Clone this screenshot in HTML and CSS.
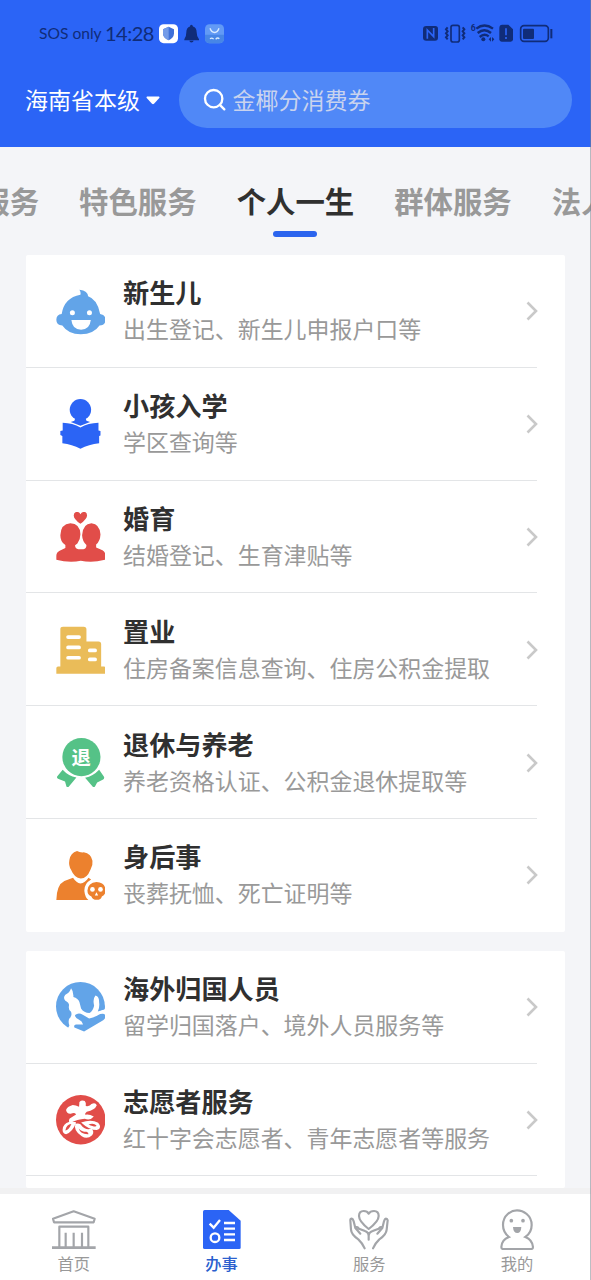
FILE: index.html
```html
<!DOCTYPE html>
<html lang="zh-CN">
<head>
<meta charset="utf-8">
<title>办事</title>
<link rel="stylesheet" href="styles.css">
</head>
<body>
<div class="app">
  <header class="header">
    <div class="status">
      <span class="carrier">SOS only</span>
      <span class="clock">14:28</span>
      <svg class="status-left" viewBox="474 66 204 68">
        <rect x="477" y="72" width="57" height="57" rx="14" fill="#fff"/>
        <path d="M506 80 L522 87 V101 Q521 114 506 120 Q490 114 489 101 V87Z" fill="#3f70d8"/>
        <path d="M506 80 L489 87 V101 Q490 114 506 120Z" fill="#739be8"/>
        <path d="M574 74 Q578 74 579 79 Q590 83 590 96 Q590 110 597 117 V120 H553 V117 Q559 110 559 96 Q559 83 570 79 Q570 74 574 74Z M568 122 H581 Q580 127 574 127 Q569 127 568 122Z" fill="#102c79"/>
        <rect x="615" y="72" width="57" height="57" rx="13" fill="#629af5"/>
        <path d="M615 104 H672 V116 Q672 129 659 129 H628 Q615 129 615 116Z" fill="#4786e6"/>
        <path d="M630 84 Q634 96 644 97 Q653 96 657 84 M630 116 Q636 111 641 117 M647 117 Q653 111 658 116" fill="none" stroke="#d7eaff" stroke-width="4"/>
      </svg>
      <svg class="status-right" viewBox="366 66 396 66">
        <g fill="none" stroke="#102c79" stroke-width="5">
          <rect x="453" y="76" width="25" height="50" rx="6"/>
          <path d="M443 82 l-5 6 5 6 -5 6 5 6 -5 6 5 6 M488 82 l5 6 -5 6 5 6 -5 6 5 6 -5 6" stroke-width="6"/>
          <path d="M529 86 Q553 67 579 86 M533 99 Q553 82 573 99 M539 111 Q553 99 566 109" stroke-width="7"/>
          <rect x="662" y="77" width="83" height="47" rx="10"/>
          <path d="M754 87 V115" stroke-width="6"/>
        </g>
        <g fill="#102c79">
          <path d="M379 78 H406 Q414 78 414 86 V113 Q414 122 405 122 H379 Q369 122 369 113 V87 Q369 78 379 78Z"/>
          <circle cx="550" cy="118" r="6"/>
          <path d="M566 118 l7 -7 v14z M583 118 l-7 -7 v14z"/>
          <path d="M607 74 H625 L639 88 V118 Q639 125 632 125 H605 Q598 125 598 118 V84 Q598 74 607 74Z"/>
          <rect x="669" y="86" width="33" height="31" rx="3"/>
        </g>
        <path d="M382 116 V90 L401 110 V84" fill="none" stroke="#2b64f6" stroke-width="5"/>
        <path d="M618 85 V106 M618 111 V117" stroke="#2b64f6" stroke-width="5"/>
        <text x="512" y="94" class="wifi-gen">6</text>
      </svg>
    </div>
    <div class="search-row">
      <span class="region">海南省本级</span>
      <svg class="caret" viewBox="0 0 14 9"><path d="M1 .5 H13 Q14 1 13.3 2 L8 7.7 Q7 8.6 6 7.7 L.7 2 Q0 1 1 .5Z" fill="#fff"/></svg>
      <div class="search">
        <svg class="search-icon" viewBox="608 264 72 72"><g fill="none" stroke="#fff" stroke-width="7" stroke-linecap="round"><circle cx="640" cy="296" r="26"/><path d="M660 316 L672 328"/></g></svg>
        <span class="hint">金椰分消费券</span>
      </div>
    </div>
  </header>

  <nav class="tabs">
    <span class="tab">主题服务</span>
    <span class="tab">特色服务</span>
    <span class="tab active">个人一生</span>
    <span class="tab">群体服务</span>
    <span class="tab">法人一生</span>
  </nav>

  <main class="content">
    <section class="card">
      <article class="row">
        <svg class="icon" viewBox="107 51 148 148">
          <path d="M177 59 Q203 62 203 79 Q231 88 239 132 Q255 134 255 149 Q255 166 237 166 Q220 192 181 192 Q143 192 126 166 Q108 166 108 149 Q108 134 124 132 Q131 83 180 74 Q182 66 177 59Z" fill="#62a4e8"/>
          <circle cx="156" cy="128" r="7.5" fill="#fff"/><circle cx="207" cy="128" r="7.5" fill="#fff"/>
          <path d="M153 150 H211 Q208 179 182 179 Q156 179 153 150Z" fill="#fff"/>
        </svg>
        <div class="copy"><h2>新生儿</h2><p>出生登记、新生儿申报户口等</p></div>
        <svg class="arrow" viewBox="0 0 12 20"><path d="M1.5 1.5 L10 10 L1.5 18.5"/></svg>
      </article>
      <article class="row">
        <svg class="icon" viewBox="107 389 148 148">
          <g fill="#2b64f5"><circle cx="180" cy="421" r="32"/>
          <path d="M165 445 H195 L198 454 L209 458 L180 469 L151 458 L162 454Z"/>
          <path d="M127 460 Q157 461 180 474 Q203 461 234 460 V483 L240 485 V498 L236 500 V521 Q205 524 180 538 Q155 524 126 521 V500 L120 497 V485 L127 483Z"/></g>
        </svg>
        <div class="copy"><h2>小孩入学</h2><p>学区查询等</p></div>
        <svg class="arrow" viewBox="0 0 12 20"><path d="M1.5 1.5 L10 10 L1.5 18.5"/></svg>
      </article>
      <article class="row">
        <svg class="icon" viewBox="107 67.5 148 148">
          <g fill="#e14d49"><path d="M180 103 Q160 89 160 78 Q160 68 169 67 Q177 67 180 74 Q184 67 192 67 Q200 68 200 78 Q199 89 180 103Z"/>
          <path d="M150 101 Q179 102 180 134 Q180 150 171 162 L164 167 Q164 177 174 179 H189 Q198 177 198 166 Q186 156 185 137 Q187 102 213 101 Q238 103 240 135 Q239 155 227 165 V174 L246 182 Q255 187 255 199 V210 Q230 216 211 216 Q195 216 181 213 Q168 216 152 216 Q130 216 108 210 V198 Q108 188 118 183 L135 175 V166 Q120 158 120 137 Q121 103 150 101Z"/></g>
        </svg>
        <div class="copy"><h2>婚育</h2><p>结婚登记、生育津贴等</p></div>
        <svg class="arrow" viewBox="0 0 12 20"><path d="M1.5 1.5 L10 10 L1.5 18.5"/></svg>
      </article>
      <article class="row">
        <svg class="icon" viewBox="107 406 148 148">
          <path d="M120 530 V418 Q120 411 128 411 H190 Q198 411 198 419 V455 H234 Q242 455 242 463 V530 H250 Q255 530 255 535 V552 H108 V535 Q108 530 113 530Z" fill="#eabc59"/>
          <path d="M143 442 H176 M143 473 H176 M143 504 H176 M208 482 H224 M208 509 H224" stroke="#fff" stroke-width="11" stroke-linecap="round"/>
        </svg>
        <div class="copy"><h2>置业</h2><p>住房备案信息查询、住房公积金提取</p></div>
        <svg class="arrow" viewBox="0 0 12 20"><path d="M1.5 1.5 L10 10 L1.5 18.5"/></svg>
      </article>
      <article class="row">
        <svg class="icon" viewBox="107 54 148 148">
          <g fill="#55c287"><circle cx="183" cy="111" r="57"/><path d="M127 149 Q144 168 168 172 L145 200 Q141 204 138 198 L134 184 L113 176 Q108 173 111 168Z M236 149 Q218 168 194 173 L217 200 Q221 203 224 198 L230 187 L248 178 Q253 174 250 169Z"/></g>
          <text x="182.5" y="134" class="medal">退</text>
        </svg>
        <div class="copy"><h2>退休与养老</h2><p>养老资格认证、公积金退休提取等</p></div>
        <svg class="arrow" viewBox="0 0 12 20"><path d="M1.5 1.5 L10 10 L1.5 18.5"/></svg>
      </article>
      <article class="row">
        <svg class="icon" viewBox="107 392 148 148">
          <g fill="#ec812e"><path d="M170 392 Q178 397 190 396 Q212 400 216 421 Q218 435 210 448 Q200 474 181 474 Q162 473 152 448 Q144 436 147 419 Q150 398 170 392Z"/>
          <path d="M158 472 Q168 488 180 489 Q194 488 204 472 L212 477 Q190 490 192 513 Q194 532 206 540 H108 Q109 493 132 482Z"/>
          <path d="M228 485 Q255 487 255 510 Q255 524 244 528 Q242 538 229 538 Q216 538 213 528 Q201 523 201 510 Q203 487 228 485Z"/></g>
          <circle cx="216" cy="507" r="7" fill="#fff"/><circle cx="240" cy="507" r="7" fill="#fff"/><path d="M228 515 l5 10 h-10z" fill="#fff"/>
        </svg>
        <div class="copy"><h2>身后事</h2><p>丧葬抚恤、死亡证明等</p></div>
        <svg class="arrow" viewBox="0 0 12 20"><path d="M1.5 1.5 L10 10 L1.5 18.5"/></svg>
      </article>
    </section>

    <section class="card">
      <article class="row">
        <svg class="icon" viewBox="107 68 148 148">
          <circle cx="180" cy="141" r="73" fill="#62a4e8"/>
          <path d="M152 87 Q160 96 159 113 Q173 117 177 128 L182 147 Q190 160 207 161 Q217 156 221 139 Q216 118 225 108 Q236 111 237 125 Q241 143 236 153 L256 149 V217 H137 L147 198 Q142 184 148 176 Q156 169 152 157 Q143 153 146 137 Q146 130 135 124 Q127 115 135 106 Q148 101 152 87Z" fill="#fff"/>
          <path d="M164 167 Q174 158 187 166 L206 177 Q222 175 239 164 Q254 160 255 170 Q256 176 248 182 L191 216 L162 204 Q159 196 167 195 H188 Q185 185 176 181 Q163 174 164 167Z" fill="#62a4e8"/>
          <path d="M234 113 Q248 121 253 141 Q254 149 248 151 L232 156 Q240 143 234 113Z" fill="#62a4e8"/>
        </svg>
        <div class="copy"><h2>海外归国人员</h2><p>留学归国落户、境外人员服务等</p></div>
        <svg class="arrow" viewBox="0 0 12 20"><path d="M1.5 1.5 L10 10 L1.5 18.5"/></svg>
      </article>
      <article class="row">
        <svg class="icon" viewBox="107 406 148 148">
          <circle cx="181" cy="480" r="74" fill="#e14d49"/>
          <path d="M177 427 Q184 420 193 424 Q199 431 196 439 Q208 441 213 433 Q225 427 229 437 Q223 452 199 456 Q192 462 195 465 Q207 463 220 470 Q210 483 193 477 Q172 478 149 490 Q143 484 148 476 L167 464 Q163 457 151 462 Q139 463 137 451 Q140 441 157 436 Q166 436 176 441Z" fill="#fff"/>
          <path d="M165 487 Q137 482 128 502 Q123 522 137 523 Q156 518 167 489Z M165 492 Q181 489 184 499 Q195 512 213 507 Q223 516 215 526 Q200 540 184 529 Q158 513 165 492Z M182 488 Q213 478 233 489 Q247 505 229 511 Q207 511 182 488Z" fill="#fff"/>
          <path d="M153 493 Q138 494 135 512 Q145 512 153 493Z M175 506 Q180 524 204 523 Q205 519 198 516 Q183 516 175 506Z M204 494 Q220 489 228 497 Q228 505 204 494Z" fill="#e14d49"/>
        </svg>
        <div class="copy"><h2>志愿者服务</h2><p>红十字会志愿者、青年志愿者等服务</p></div>
        <svg class="arrow" viewBox="0 0 12 20"><path d="M1.5 1.5 L10 10 L1.5 18.5"/></svg>
      </article>
      <div class="row-peek"></div>
    </section>
  </main>

  <footer class="tabbar">
    <a class="item">
      <svg class="nav-icon" viewBox="153 117 138 123"><g fill="none" stroke="#a3a5a9" stroke-width="6.5" stroke-linejoin="round"><path d="M221 124 L284 146 L281 157 H162 L159 146Z"/><path d="M178 232 V170 H265 V232 M197 188 V232 M221 188 V232 M246 188 V232"/><path d="M156 233 H287" stroke-width="8"/></g></svg>
      <span>首页</span>
    </a>
    <a class="item current">
      <svg class="nav-icon" viewBox="594 117 138 123"><path d="M611 120 H683 L719 152 V233 Q719 237 715 237 H611 Q606 237 606 233 V125 Q606 120 611 120Z" fill="#2b64f5"/><g fill="none" stroke="#fff" stroke-width="7"><path d="M626 161 L638 173 L657 150"/><circle cx="642" cy="203" r="13"/><path d="M669 159 H702 M669 176 H702 M669 193 H702 M669 210 H702"/></g></svg>
      <span>办事</span>
    </a>
    <a class="item">
      <svg class="nav-icon" viewBox="138 117 138 123"><g fill="none" stroke="#a3a5a9" stroke-width="6.5" stroke-linejoin="round" stroke-linecap="round"><path d="M206 177 Q177 154 177 138 Q177 123 191 123 Q202 123 206 131 Q211 123 222 123 Q236 123 236 138 Q236 154 206 177Z"/><path d="M194 235 Q187 219 175 208 Q154 194 153 179 L151 151 Q151 146 155 146 Q159 147 161 154 L166 174 L181 191 M166 174 Q170 168 177 176 L195 183 Q206 187 206 198 V209 M219 235 Q226 219 238 208 Q259 194 260 179 L263 151 Q262 146 258 146 Q254 147 252 154 L247 174 L232 191 M247 174 Q243 168 236 176 L218 183 Q206 187 206 198"/></g></svg>
      <span>服务</span>
    </a>
    <a class="item">
      <svg class="nav-icon" viewBox="583 117 138 123"><path d="M652 121 C634 121 610 136 610 165 Q610 187 628 201 Q606 209 605 231 Q605 237 610 237 H695 Q700 237 700 231 Q698 209 677 201 Q696 188 696 165 C696 136 671 121 652 121Z" fill="none" stroke="#a3a5a9" stroke-width="6.5"/><g fill="#a3a5a9"><circle cx="635" cy="152" r="5.5"/><circle cx="670" cy="152" r="5.5"/><path d="M640 171 H665 Q664 189 653 189 Q641 189 640 171Z"/></g></svg>
      <span>我的</span>
    </a>
  </footer>
  <div class="edge"></div>
</div>
</body>
</html>
```

FILE: styles.css
```css
* { box-sizing: border-box; }
body {
  margin: 0;
  font-family: "Noto Sans CJK SC", sans-serif;
  background: #f4f5f8;
}
svg { display: block; flex: none; }
h2, p { margin: 0; }
.app {
  position: relative;
  display: flex;
  flex-direction: column;
  width: 591px;
  height: 1280px;
  overflow: hidden;
  white-space: nowrap;
}
.header {
  flex: none;
  height: 147px;
  background: #2b64f6;
}
.status {
  display: flex;
  align-items: center;
  height: 66px;
  padding: 0 37px 0 39px;
  color: #102c79;
  font-family: Lato, sans-serif;
}
.carrier { width: 66px; font-size: 15.6px; }
.clock { width: 53px; font-size: 20px; letter-spacing: -0.5px; }
.status-left { width: 68px; height: 23px; }
.status-right { width: 132px; height: 22px; margin-left: auto; }
.wifi-gen { font: bold 26px "Roboto", sans-serif; fill: #102c79; }
.search-row {
  display: flex;
  align-items: center;
  height: 56px;
  margin-top: 6px;
  padding: 0 19px 0 25px;
}
.region { width: 115px; padding-bottom: 2px; font-size: 23px; line-height: 54px; color: #fff; }
.caret { width: 14px; height: 9px; margin: 0 19px 0 6px; }
.search {
  display: flex;
  flex: 1;
  align-items: center;
  gap: 6px;
  height: 56px;
  padding-left: 23.5px;
  border-radius: 28px;
  background: #5088f7;
  color: #c9d3ee;
  font-size: 23px;
}
.hint { padding-bottom: 2px; }
.search-icon { width: 24px; height: 24px; }
.tabs {
  display: flex;
  flex: none;
  gap: 40px;
  height: 108px;
  margin-left: -78.5px;
  padding-top: 29px;
}
.tab {
  display: flex;
  flex: none;
  flex-direction: column;
  align-items: center;
  color: #999;
  font-size: 29.4px;
  font-weight: 700;
  line-height: 48px;
}
.tab.active { color: #303030; }
.tab.active::after {
  content: "";
  width: 44px;
  height: 6px;
  margin-top: 7px;
  border-radius: 3px;
  background: #2b64ee;
}
.content {
  flex: none;
  height: 933px;
  padding: 0 26px;
  overflow: hidden;
}
.card {
  margin-bottom: 19px;
  border-radius: 2px;
  background: #fff;
}
.row {
  display: flex;
  align-items: center;
  width: 511px;
  height: 112.8px;
  padding: 1px 0 0 29.5px;
  border-bottom: 1px solid #e3e5e7;
}
.card:first-child .row:last-child { border-bottom-color: transparent; }
.icon { width: 49.5px; height: 49.5px; }
.copy { flex: 1; margin-left: 18px; padding-bottom: 3px; }
.copy h2 {
  color: #303030;
  font-size: 26.15px;
  font-weight: 700;
  line-height: 38px;
}
.copy p {
  color: #999;
  font-size: 22.95px;
  line-height: 35px;
}
.arrow { width: 12px; height: 20px; margin-right: -1px; }
.arrow path { fill: none; stroke: #c9c9c9; stroke-width: 2.6; }
.medal {
  fill: #fff;
  font-size: 58px;
  font-weight: 700;
  text-anchor: middle;
}
.row-peek { height: 12px; }
.tabbar {
  display: flex;
  flex: none;
  height: 92px;
  border-top: 6px solid #f1f1f2;
  background: #fff;
}
.item {
  display: flex;
  flex: 1;
  flex-direction: column;
  align-items: center;
  padding-top: 15px;
  color: #999;
  font-size: 16.3px;
  line-height: 24px;
}
.item.current { color: #2b5fce; font-weight: 500; }
.nav-icon { width: 46px; height: 41px; margin-bottom: 1px; }
.edge {
  position: absolute;
  top: 0;
  right: 0;
  width: 1px;
  height: 1280px;
  background: rgba(120, 125, 135, 0.5);
}
```
